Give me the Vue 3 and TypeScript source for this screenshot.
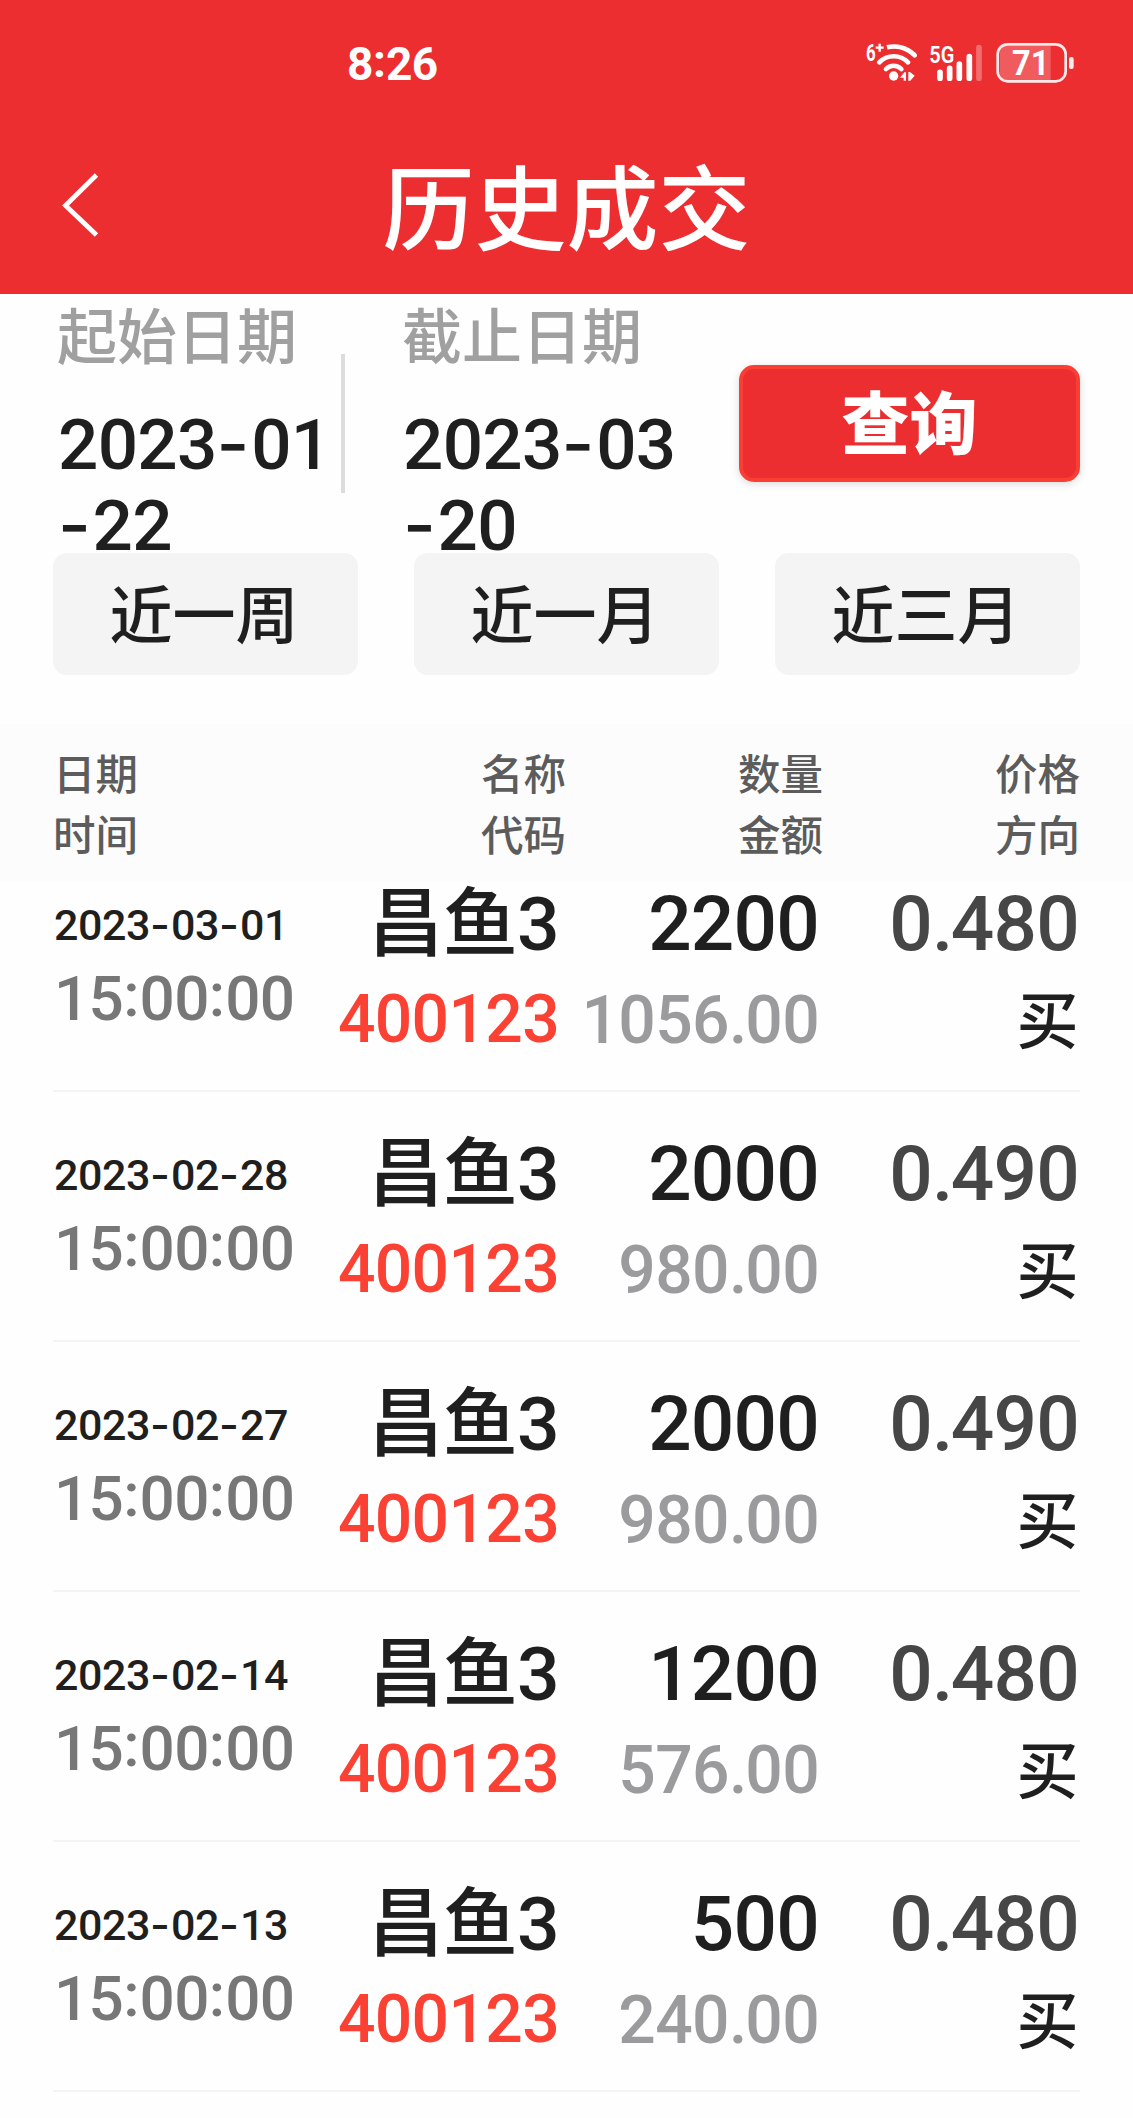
<script setup lang="ts">
import { h, type FunctionalComponent } from 'vue'

interface Trade {
  date: string
  time: string
  name: string
  code: string
  quantity: string
  amount: string
  price: string
  side: string
}

const trades: Trade[] = [
  { date: '2023-03-01', time: '15:00:00', name: '昌鱼3', code: '400123', quantity: '2200', amount: '1056.00', price: '0.480', side: '买' },
  { date: '2023-02-28', time: '15:00:00', name: '昌鱼3', code: '400123', quantity: '2000', amount: '980.00', price: '0.490', side: '买' },
  { date: '2023-02-27', time: '15:00:00', name: '昌鱼3', code: '400123', quantity: '2000', amount: '980.00', price: '0.490', side: '买' },
  { date: '2023-02-14', time: '15:00:00', name: '昌鱼3', code: '400123', quantity: '1200', amount: '576.00', price: '0.480', side: '买' },
  { date: '2023-02-13', time: '15:00:00', name: '昌鱼3', code: '400123', quantity: '500', amount: '240.00', price: '0.480', side: '买' },
]

const headings: [string, string][] = [
  ['日期', '时间'],
  ['名称', '代码'],
  ['数量', '金额'],
  ['价格', '方向'],
]

const shortcuts = ['近一周', '近一月', '近三月']

const separatorClass: Record<string, string> = { '-': 'sep-dash', ':': 'sep-colon', '.': 'sep-dot' }

// Digits with individually spaced separators
const Num: FunctionalComponent<{ value: string }> = (props) =>
  h(
    'span',
    { class: 'num' },
    props.value
      .split(/([-:.])/)
      .map((part) => (separatorClass[part] ? h('span', { class: separatorClass[part] }, part) : part)),
  )
Num.props = ['value']
</script>

<template>
  <div class="screen">
    <header class="top">
      <div class="status">
        <span class="clock"><Num value="8:26" /></span>
        <div class="indicators">
          <svg class="wifi" viewBox="75 30 156 159" width="52" height="53">
            <g fill="none" stroke="#fff" stroke-width="14" stroke-linecap="round">
              <path stroke-linecap="butt" d="M141 82A88 88 0 0 1 222 104" />
              <path d="M222 104l2 2M118 127A60 60 0 0 1 204 127" />
              <path d="M138 147A32 32 0 0 1 184 147" />
            </g>
            <circle cx="161" cy="168" r="14" fill="#fff" />
            <path d="M180 173L193 157H198V182H191V173ZM205 156H210L224 167L211 182H205Z" fill="#fff" />
            <text x="78" y="122" font-size="72" font-weight="700" textLength="29" lengthAdjust="spacingAndGlyphs" fill="#fff">6</text>
            <path d="M107 83H131M119 71V95" stroke="#fff" stroke-width="7" />
          </svg>
          <svg class="signal" viewBox="266 30 162 159" width="54" height="53">
            <g stroke="#fff" stroke-width="17" stroke-linecap="round">
              <path d="M299 157V174.500M328 145V174.500M357 132V174.500M387 110V174.500" />
              <path d="M416 83V174.500" opacity=".3" />
            </g>
            <text x="267" y="128" font-size="73" font-weight="600" textLength="75" lengthAdjust="spacingAndGlyphs" fill="#fff">5G</text>
          </svg>
          <svg class="battery" viewBox="468 30 234 159" width="78" height="53">
            <path d="M503 78H632V180H503Q479 180 479 154V104Q479 78 503 78Z" fill="#fff" opacity=".22" />
            <rect x="473" y="73" width="204" height="111" rx="30" fill="none" stroke="#fff" stroke-width="8" opacity=".9" />
            <rect x="687" y="111" width="14" height="36" rx="6" fill="#fff" opacity=".9" />
            <text x="516" y="165" font-size="104" font-weight="700" textLength="112" lengthAdjust="spacingAndGlyphs" fill="#fff">71</text>
          </svg>
        </div>
      </div>
      <div class="navbar">
        <button class="back" aria-label="返回">
          <svg viewBox="0 0 38 64" width="38" height="64">
            <path d="M35.500 2L4.500 32.500L35.500 62" fill="none" stroke="#fff" stroke-width="4.800" />
          </svg>
        </button>
        <h1 class="title">历史成交</h1>
      </div>
    </header>

    <section class="filter">
      <div class="field start">
        <div class="label">起始日期</div>
        <div class="date"><Num value="2023-01" /><br /><Num value="-22" /></div>
      </div>
      <div class="divider"></div>
      <div class="field end">
        <div class="label">截止日期</div>
        <div class="date"><Num value="2023-03" /><br /><Num value="-20" /></div>
      </div>
      <button class="query">查询</button>
    </section>

    <nav class="shortcuts">
      <button v-for="s in shortcuts" :key="s" class="shortcut">{{ s }}</button>
    </nav>

    <div class="thead">
      <div v-for="pair in headings" :key="pair[0]" class="th">
        <div>{{ pair[0] }}</div>
        <div>{{ pair[1] }}</div>
      </div>
    </div>

    <main class="list">
      <article v-for="t in trades" :key="t.date" class="row">
        <div class="cell when">
          <div class="day"><Num :value="t.date" /></div>
          <div class="time"><Num :value="t.time" /></div>
        </div>
        <div class="cell stock">
          <div class="big name">{{ t.name }}</div>
          <div class="small code">{{ t.code }}</div>
        </div>
        <div class="cell volume">
          <div class="big">{{ t.quantity }}</div>
          <div class="small amount"><Num :value="t.amount" /></div>
        </div>
        <div class="cell deal">
          <div class="big price"><Num :value="t.price" /></div>
          <div class="small side">{{ t.side }}</div>
        </div>
      </article>
    </main>
  </div>
</template>

<style>
body {
  background: #fefefe;
}

.num {
  white-space: nowrap;
  letter-spacing: -0.01em;
}

.sep-dash {
  font-family: Inter, sans-serif;
  font-weight: 450;
  line-height: 0;
  letter-spacing: 0.025em;
}

.sep-colon {
  position: relative;
  top: -0.06em;
  letter-spacing: 0;
}

.sep-dot {
  letter-spacing: -0.03em;
}
</style>

<style scoped>
.screen {
  width: 1133px;
  height: 2118px;
  overflow: hidden;
  background: #fefefe;
  color: #1f1f1f;
  font-family: Roboto, 'Noto Sans CJK SC', sans-serif;
  font-weight: 500;
}

button {
  margin: 0;
  padding: 0;
  border: 0;
  background: none;
  color: inherit;
  font: inherit;
}

.top {
  height: 294px;
  background: #ec2e31;
  color: #fff;
}

.status {
  display: flex;
  justify-content: space-between;
  height: 118px;
  padding: 0 59px 0 347px;
}

.clock {
  padding-top: 34px;
  font-size: 46px;
  font-weight: 700;
  line-height: 60px;
}

.indicators {
  display: flex;
  padding-top: 30px;
}

.indicators svg {
  display: block;
}

.signal {
  margin-left: 12px;
}

.battery {
  margin-left: 13px;
}

.navbar {
  display: grid;
  grid-template-columns: 200px 1fr 200px;
  height: 176px;
}

.back {
  display: flex;
  padding: 55px 0 0 61px;
}

.title {
  margin: 0;
  padding-top: 44px;
  font-size: 92px;
  font-weight: 500;
  line-height: 100px;
  text-align: center;
  white-space: nowrap;
}

.filter {
  display: flex;
  height: 259px;
}

.start {
  width: 284px;
  padding-left: 57px;
}

.end {
  width: 337px;
  padding-left: 57px;
}

.label {
  padding-top: 10px;
  color: #a0a0a0;
  font-size: 60px;
  line-height: 70px;
}

.date {
  margin-top: 30px;
  padding-left: 1px;
  font-size: 71px;
  line-height: 81px;
}

.divider {
  width: 4px;
  height: 139px;
  margin-top: 60px;
  background: #dcdcdc;
}

.query {
  box-sizing: border-box;
  width: 341px;
  height: 117px;
  margin-top: 71px;
  padding-top: 5px;
  border: 4px solid #fb3e34;
  border-radius: 15px;
  background: #ec2e31;
  box-shadow: 0 2px 8px rgba(0, 0, 0, 0.14);
  color: #fff;
  font-size: 68px;
  font-weight: 900;
  line-height: 104px;
}

.shortcuts {
  display: grid;
  grid-template-columns: repeat(3, 305px);
  justify-content: space-between;
  height: 171px;
  padding: 0 53px;
}

.shortcut {
  box-sizing: border-box;
  height: 122px;
  padding: 6px 3px 0 0;
  border-radius: 14px;
  background: #f4f4f4;
  font-size: 63px;
  line-height: 116px;
}

.thead {
  display: grid;
  grid-template-columns: 256px 257px 257px 257px;
  height: 159px;
  box-sizing: border-box;
  padding: 21px 53px 0;
  background: #fcfcfc;
  color: #5c5c5c;
  font-size: 42.500px;
  line-height: 61px;
  text-align: right;
}

.th:first-child {
  text-align: left;
}

.list {
  margin: -41px 53px 0;
}

.row {
  display: grid;
  grid-template-columns: 250px 256px 260px 261px;
  box-sizing: border-box;
  height: 250px;
  padding-top: 36px;
  border-bottom: 2px solid #f4f4f4;
}

.cell {
  text-align: right;
  white-space: nowrap;
}

.when {
  padding-top: 18px;
  text-align: left;
}

.day {
  padding-left: 1px;
  font-size: 43px;
  line-height: 58px;
}

.time {
  padding-left: 1px;
  color: #777;
  font-size: 62px;
  line-height: 89px;
}

.big {
  font-size: 76.500px;
  line-height: 92px;
  letter-spacing: -0.01em;
}

.name {
  margin-bottom: -2px;
  font-size: 75px;
  line-height: 93px;
}

.small {
  font-size: 66px;
  line-height: 102px;
  letter-spacing: -0.01em;
}

.code {
  color: #fb4034;
}

.amount {
  color: #9b9b9d;
}

.price {
  padding-right: 1px;
  color: #464646;
}

.side {
  padding-right: 2px;
  font-size: 62px;
  line-height: 105px;
}
</style>
